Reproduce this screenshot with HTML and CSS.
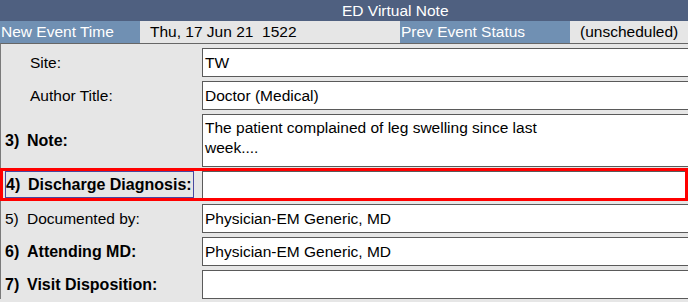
FILE: index.html
```html
<!DOCTYPE html>
<html lang="en">
<head>
<meta charset="utf-8">
<title>ED Virtual Note</title>
<link rel="stylesheet" href="styles.css">
</head>
<body>
<div class="titlebar"><span class="title-text">ED Virtual Note</span></div>
<div class="eventbar">
  <div class="ev-label ev-new">New Event Time</div>
  <div class="ev-value ev-time">Thu, 17 Jun 21&nbsp; 1522</div>
  <div class="ev-label ev-prev">Prev Event Status</div>
  <div class="ev-value ev-status">(unscheduled)</div>
</div>
<div class="panel">
  <div class="row">
    <div class="label indent">Site:</div>
    <div class="field">TW</div>
  </div>
  <div class="row">
    <div class="label indent">Author Title:</div>
    <div class="field">Doctor (Medical)</div>
  </div>
  <div class="row row-note">
    <div class="label bold"><span class="num">3)</span>Note:</div>
    <div class="field field-note">The patient complained of leg swelling since last<br>week....</div>
  </div>
  <div class="row row-flagged">
    <div class="label bold label-boxed"><span class="num">4)</span>Discharge Diagnosis:</div>
    <div class="field"></div>
  </div>
  <div class="row">
    <div class="label"><span class="num">5)</span>Documented by:</div>
    <div class="field">Physician-EM Generic, MD</div>
  </div>
  <div class="row">
    <div class="label bold"><span class="num">6)</span>Attending MD:</div>
    <div class="field">Physician-EM Generic, MD</div>
  </div>
  <div class="row">
    <div class="label bold"><span class="num">7)</span>Visit Disposition:</div>
    <div class="field"></div>
  </div>
</div>
</body>
</html>
```

FILE: styles.css
```css
html, body {
  margin: 0;
  padding: 0;
  overflow: hidden;
  background: #e6e6e6;
  font-family: "Liberation Sans", Arial, sans-serif;
  font-size: 15.5px;
  color: #000;
}

.titlebar {
  height: 21px;
  line-height: 21px;
  background: #4f6080;
  color: #ffffff;
  padding-left: 342px;
  white-space: nowrap;
}

.eventbar {
  display: flex;
  height: 22px;
  line-height: 22px;
  background: #e6e6e6;
  white-space: nowrap;
}

.ev-label {
  background: #7090b3;
  color: #ffffff;
  padding-left: 1px;
  box-sizing: border-box;
}

.ev-new {
  width: 140px;
}

.ev-time {
  width: 260px;
  padding-left: 10px;
  box-sizing: border-box;
}

.ev-prev {
  width: 170px;
}

.ev-status {
  padding-left: 10px;
}

.panel {
  border-top: 1px solid #666666;
  border-left: 1px solid #7a7a7a;
  padding-top: 4px;
  background: #e6e6e6;
}

.row {
  display: flex;
  align-items: center;
  margin-bottom: 4px;
}

.label {
  width: 201px;
  flex: none;
  box-sizing: border-box;
  padding-left: 4px;
  white-space: nowrap;
}

.label.indent {
  padding-left: 29px;
}

.bold {
  font-weight: bold;
  font-size: 16px;
}

.num {
  display: inline-block;
  width: 22px;
}

.field {
  flex: 1;
  min-width: 0;
  height: 29px;
  line-height: 27px;
  box-sizing: border-box;
  border: 1px solid #5a5a5a;
  border-right: none;
  background: #ffffff;
  padding-left: 2px;
  white-space: nowrap;
  overflow: hidden;
}

.row-note {
  margin-bottom: 1px;
}

.field-note {
  height: 53px;
  line-height: 20px;
  padding-top: 3px;
}

.row-flagged {
  width: calc(100% + 1px);
  box-sizing: border-box;
  margin-left: -1px;
  margin-bottom: 3px;
  border: 3px solid #ff0000;
  align-items: stretch;
  height: 33px;
}

.row-flagged .label-boxed {
  width: 189px;
  margin-left: 2px;
  margin-right: 8px;
  border: 1px solid #4848a0;
  padding-left: 0;
  line-height: 25px;
}

.row-flagged .field {
  height: auto;
  border-bottom: none;
}
```
